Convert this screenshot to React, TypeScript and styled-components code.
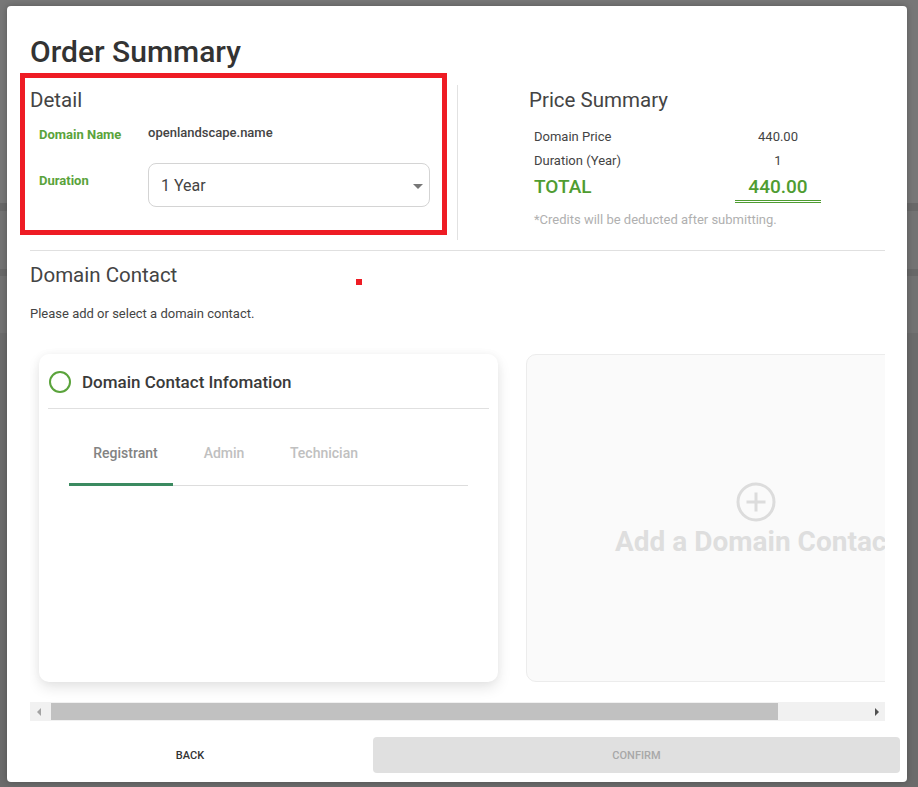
import React from "react";
import styled, { createGlobalStyle } from "styled-components";

const GlobalStyle = createGlobalStyle`
  html, body { margin: 0; padding: 0; }
  * { box-sizing: border-box; }
  body {
    font-family: Roboto, "Liberation Sans", Arial, sans-serif;
    background: linear-gradient(
      to bottom,
      #777777 0px, #777777 203px,
      #686868 203px, #686868 211px,
      #737373 211px, #737373 269px,
      #686868 269px, #686868 276px,
      #727272 276px, #727272 333px,
      #6b6b6b 333px, #6b6b6b 100%
    );
    min-height: 787px;
  }
`;

const GREEN = "#5aa33b";

const Page = styled.div`
  width: 918px;
  height: 787px;
  padding: 6px 0 0 7px;
  overflow: hidden;
`;

const Modal = styled.div`
  position: relative;
  width: 900px;
  height: 776px;
  background: #ffffff;
  border-radius: 4px;
  padding: 28px 22px 9px 23px;
  display: flex;
  flex-direction: column;
  box-shadow: 0 0 6px rgba(0, 0, 0, 0.25);
`;

const Title = styled.h1`
  margin: 0;
  font-size: 30px;
  line-height: 36px;
  font-weight: 500;
  color: #333333;
`;

const TopSection = styled.div`
  display: flex;
  height: 155px;
  margin-top: 15px;
`;

const DetailCol = styled.div`
  width: 427px;
  padding-top: 3px;
`;

const PriceCol = styled.div`
  flex: 1;
  border-left: 1px solid #e2e2e2;
  padding: 3px 0 0 71px;
`;

const SectionHeading = styled.h2<{ $top?: number }>`
  margin: ${(p) => p.$top ?? 0}px 0 0 0;
  font-size: 20.5px;
  line-height: 24px;
  font-weight: 400;
  color: #444444;
`;

const FieldGrid = styled.div`
  display: grid;
  grid-template-columns: 109px 282px;
  row-gap: 19px;
  margin: 13px 0 0 9px;
  align-items: start;
`;

const FieldLabel = styled.div<{ $top?: number }>`
  font-size: 13px;
  line-height: 18px;
  font-weight: 700;
  color: ${GREEN};
  margin-top: ${(p) => p.$top ?? 0}px;
`;

const FieldValue = styled.div`
  font-size: 13px;
  line-height: 16px;
  font-weight: 500;
  color: #444444;
`;

const SelectBox = styled.div`
  height: 44px;
  border: 1px solid #d4d4d4;
  border-radius: 8px;
  display: flex;
  align-items: center;
  justify-content: space-between;
  padding: 0 6px 0 12px;
  font-size: 16px;
  color: #444444;
`;

const Caret = styled.span`
  width: 0;
  height: 0;
  border-left: 5px solid transparent;
  border-right: 5px solid transparent;
  border-top: 5px solid #777777;
  margin-top: 2px;
`;

const PriceTable = styled.table`
  margin-top: 13px;
  border-collapse: separate;
  border-spacing: 0;
  font-size: 13px;
  color: #444444;
`;

const PriceLabel = styled.td<{ $total?: boolean }>`
  width: 206px;
  padding: 0 0 0 5px;
  height: ${(p) => (p.$total ? 30 : 24)}px;
  font-size: ${(p) => (p.$total ? 19 : 13)}px;
  font-weight: ${(p) => (p.$total ? 500 : 400)};
  color: ${(p) => (p.$total ? "#4f9c31" : "#444444")};
  vertical-align: top;
  line-height: ${(p) => (p.$total ? "27px" : "24px")};
`;

const PriceValue = styled.td<{ $total?: boolean }>`
  width: 86px;
  padding: 0;
  text-align: center;
  font-size: ${(p) => (p.$total ? 19 : 13)}px;
  font-weight: ${(p) => (p.$total ? 500 : 400)};
  color: ${(p) => (p.$total ? "#4f9c31" : "#444444")};
  line-height: ${(p) => (p.$total ? "27px" : "24px")};
  vertical-align: top;
  border-bottom: ${(p) => (p.$total ? "3px double #4f9c31" : "none")};
`;

const Note = styled.div`
  margin: 9px 0 0 5px;
  font-size: 13px;
  line-height: 16px;
  color: #b0b0b0;
`;

const Rule = styled.div`
  margin-top: 10px;
  height: 1px;
  background: #e0e0e0;
`;

const Hint = styled.p`
  margin: 18px 0 0 0;
  font-size: 13px;
  line-height: 18px;
  color: #444444;
`;

const Viewport = styled.div`
  height: 379px;
  overflow: hidden;
`;

const CardsRow = styled.div`
  display: flex;
  gap: 28px;
  width: max-content;
  padding: 31px 11px 20px 9px;
`;

const ContactCard = styled.div`
  width: 459px;
  height: 328px;
  background: #ffffff;
  border-radius: 10px;
  box-shadow: 0 6px 14px rgba(0, 0, 0, 0.1), 0 0 8px rgba(0, 0, 0, 0.04);
`;

const CardHeader = styled.div`
  margin: 0 9px;
  padding: 17px 1px 15px;
  border-bottom: 1px solid #e0e0e0;
  display: flex;
  align-items: center;
  gap: 11px;
`;

const Radio = styled.span`
  width: 22px;
  height: 22px;
  border-radius: 50%;
  border: 2px solid ${GREEN};
  flex: none;
`;

const CardTitle = styled.div`
  font-size: 17px;
  line-height: 22px;
  font-weight: 500;
  color: #3a3a3a;
`;

const TabList = styled.div`
  margin: 12px 30px 0;
  display: flex;
  border-bottom: 1px solid #dddddd;
`;

const Tab = styled.div<{ $active?: boolean; $w: number; $pad?: number }>`
  width: ${(p) => p.$w}px;
  height: 65px;
  margin-bottom: -1px;
  display: flex;
  align-items: center;
  justify-content: center;
  padding: 2px 0 0 ${(p) => p.$pad ?? 0}px;
  font-size: 14px;
  font-weight: 500;
  color: ${(p) => (p.$active ? "#838383" : "#c0c0c0")};
  border-bottom: 3px solid ${(p) => (p.$active ? "#3b8a60" : "transparent")};
`;

const AddCard = styled.div`
  width: 459px;
  height: 328px;
  background: #fafafa;
  border: 1px solid #ececec;
  border-radius: 10px;
  display: flex;
  flex-direction: column;
  align-items: center;
  justify-content: center;
  gap: 4px;
  padding-top: 4px;
`;

const AddText = styled.div`
  font-size: 28px;
  line-height: 32px;
  font-weight: 700;
  color: #dedede;
  white-space: nowrap;
`;

const ScrollBar = styled.div`
  height: 19px;
  display: flex;
  background: #f1f1f1;
`;

const ScrollArrow = styled.div<{ $dir: "left" | "right"; $color: string }>`
  width: 17px;
  flex: none;
  display: flex;
  align-items: center;
  justify-content: center;

  &::before {
    content: "";
    width: 0;
    height: 0;
    border-top: 4px solid transparent;
    border-bottom: 4px solid transparent;
    ${(p) =>
      p.$dir === "left"
        ? `border-right: 4px solid ${p.$color};`
        : `border-left: 4px solid ${p.$color};`}
  }
`;

const ScrollTrack = styled.div`
  flex: 1;
  display: flex;
  padding: 1px 0 1px 4px;
`;

const ScrollThumb = styled.div`
  background: #c1c1c1;
  height: 100%;
`;

const Footer = styled.div`
  margin: 16px -15px 0 0;
  display: flex;
  gap: 23px;
`;

const BaseButton = styled.button`
  height: 36px;
  border: none;
  border-radius: 4px;
  font-family: Roboto, "Liberation Sans", Arial, sans-serif;
  font-size: 11px;
  font-weight: 500;
  text-transform: uppercase;
  cursor: pointer;
`;

const BackButton = styled(BaseButton)`
  width: 320px;
  background: transparent;
  color: #333333;
`;

const ConfirmButton = styled(BaseButton)`
  flex: 1;
  background: #e0e0e0;
  color: #a8a8a8;
`;

const HighlightBox = styled.div`
  position: absolute;
  left: 13px;
  top: 67px;
  width: 427px;
  height: 162px;
  border: 5px solid #ee1c24;
  pointer-events: none;
`;

const Marker = styled.div`
  position: absolute;
  left: 349px;
  top: 273px;
  width: 6px;
  height: 6px;
  background: #ee1c24;
`;

const PlusCircle = () => (
  <svg width="40" height="40" viewBox="0 0 40 40" fill="none">
    <circle cx="20" cy="20" r="18" stroke="#dcdcdc" strokeWidth="3" />
    <path d="M20 10.5v19M10.5 20h19" stroke="#dcdcdc" strokeWidth="3" />
  </svg>
);

const VIEWPORT_WIDTH = 855;
const CONTENT_WIDTH = 966;
const TRACK_WIDTH = VIEWPORT_WIDTH - 34;

export default function App() {
  const thumbWidth = Math.round((TRACK_WIDTH * VIEWPORT_WIDTH) / CONTENT_WIDTH);
  return (
    <>
      <GlobalStyle />
      <Page>
        <Modal>
          <Title>Order Summary</Title>
          <TopSection>
            <DetailCol>
              <SectionHeading>Detail</SectionHeading>
              <FieldGrid>
                <FieldLabel $top={1}>Domain Name</FieldLabel>
                <FieldValue>openlandscape.name</FieldValue>
                <FieldLabel $top={9}>Duration</FieldLabel>
                <SelectBox>
                  <span>1 Year</span>
                  <Caret />
                </SelectBox>
              </FieldGrid>
            </DetailCol>
            <PriceCol>
              <SectionHeading>Price Summary</SectionHeading>
              <PriceTable>
                <tbody>
                  <tr>
                    <PriceLabel>Domain Price</PriceLabel>
                    <PriceValue>440.00</PriceValue>
                  </tr>
                  <tr>
                    <PriceLabel>Duration (Year)</PriceLabel>
                    <PriceValue>1</PriceValue>
                  </tr>
                  <tr>
                    <PriceLabel $total>TOTAL</PriceLabel>
                    <PriceValue $total>440.00</PriceValue>
                  </tr>
                </tbody>
              </PriceTable>
              <Note>*Credits will be deducted after submitting.</Note>
            </PriceCol>
          </TopSection>
          <Rule />
          <SectionHeading $top={12}>Domain Contact</SectionHeading>
          <Hint>Please add or select a domain contact.</Hint>
          <Viewport>
            <CardsRow>
              <ContactCard>
                <CardHeader>
                  <Radio />
                  <CardTitle>Domain Contact Infomation</CardTitle>
                </CardHeader>
                <TabList>
                  <Tab $active $w={104} $pad={9}>Registrant</Tab>
                  <Tab $w={102}>Admin</Tab>
                  <Tab $w={98}>Technician</Tab>
                </TabList>
              </ContactCard>
              <AddCard>
                <PlusCircle />
                <AddText>Add a Domain Contact</AddText>
              </AddCard>
            </CardsRow>
          </Viewport>
          <ScrollBar>
            <ScrollArrow $dir="left" $color="#a3a3a3" />
            <ScrollTrack>
              <ScrollThumb style={{ width: thumbWidth }} />
            </ScrollTrack>
            <ScrollArrow $dir="right" $color="#505050" />
          </ScrollBar>
          <Footer>
            <BackButton>Back</BackButton>
            <ConfirmButton>Confirm</ConfirmButton>
          </Footer>
          <HighlightBox />
          <Marker />
        </Modal>
      </Page>
    </>
  );
}
